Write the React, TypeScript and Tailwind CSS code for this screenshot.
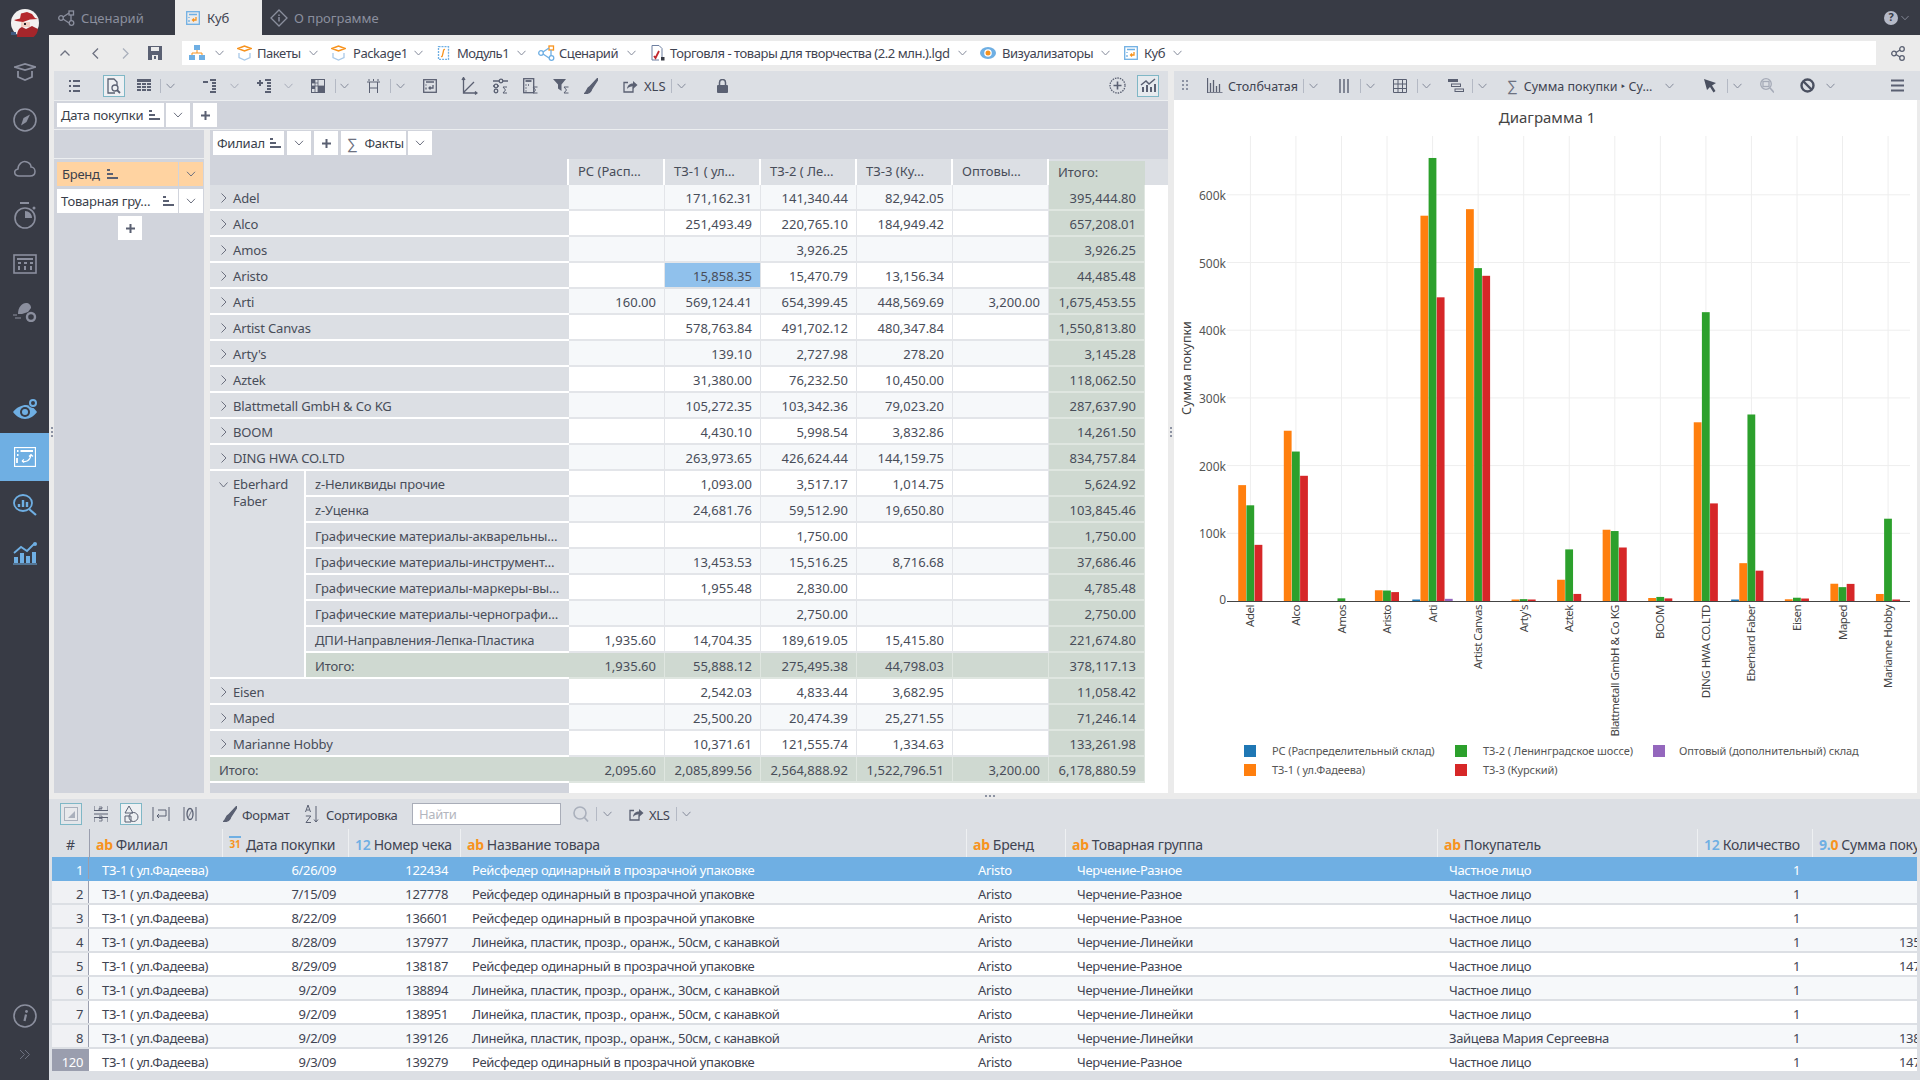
import type { ReactNode } from 'react'

const INK = '#5a6072'

type IcProps = { w: number; h: number; className?: string; children: ReactNode; color?: string }

const Ic = ({ w, h, className = '', children, color = INK }: IcProps) => (
  <svg width={w} height={h} viewBox={`0 0 ${w} ${h}`} fill="none" stroke={color} strokeWidth="1.3" className={`shrink-0 ${className}`}>
    {children}
  </svg>
)

const Chev = ({ className = '', color = '#858b9b', s = 9 }: { className?: string; color?: string; s?: number }) => (
  <svg width={s} height={6} viewBox="0 0 9 6" fill="none" stroke={color} strokeWidth="1" className={`shrink-0 ${className}`}>
    <path d="M.5 .8 4.5 5 8.5 .8" />
  </svg>
)

const Divider = ({ className = '' }: { className?: string }) => <div className={`h-[14px] w-px shrink-0 bg-[#b4b9c4] ${className}`} />

const SortMark = ({ className = '' }: { className?: string }) => (
  <svg width={11} height={11} viewBox="0 0 11 11" fill="#5a6072" className={`shrink-0 ${className}`}>
    <rect x="0" y="0" width="3" height="2" />
    <rect x="0" y="4" width="6" height="2" />
    <rect x="0" y="8" width="11" height="2" />
  </svg>
)

const BoxIcon = ({ className = '' }: { className?: string }) => (
  <Ic w={15} h={16} className={className} color="#f7931e">
    <path d="M1 3.5 7.5 1 14 3.5 7.5 6z" strokeWidth="1.5" />
    <path d="M2 8v4.5L7.5 15 13 12.500V8" stroke="#a9c9e8" />
  </Ic>
)

const CubeIcon = ({ className = '' }: { className?: string }) => (
  <Ic w={14} h={14} className={className} color="#6fafe3">
    <rect x=".7" y=".7" width="12.600" height="12.600" />
    <path d="M3 3.500h8" strokeWidth="1.5" />
    <path d="M3 6v1M3 9v2" stroke="#6fafe3" />
    <path d="M10 6v3H6.500M8 7.500 6.500 9 8 10.500" stroke="#f7931e" />
  </Ic>
)

const ScenarioIcon = ({ className = '', color = '#6fafe3', dot = '#f7931e' }: { className?: string; color?: string; dot?: string }) => (
  <Ic w={17} h={16} className={className} color={color}>
    <circle cx="3" cy="8" r="2.300" />
    <rect x="11" y="1" width="4.500" height="4" stroke={dot} />
    <circle cx="13.500" cy="13" r="2.300" />
    <path d="M5 7 11 3M5 9l6 4M13 5v6" />
  </Ic>
)

const ShareArrow = ({ className = '' }: { className?: string }) => (
  <Ic w={15} h={14} className={className}>
    <path d="M10 7.500V13H1V3.500h4" />
    <path d="M4 10c.500-4 3-5.500 6-5.500V2l4.500 4-4.500 4V7.500C7.500 7.500 5.500 8 4 10z" fill={INK} stroke="none" />
  </Ic>
)

const BrushIcon = ({ className = '' }: { className?: string }) => (
  <Ic w={14} h={16} className={className}>
    <path d="M13.500 .5 6 8.500 8 10.500 13.800 1.500z" fill={INK} />
    <path d="M5.500 9C3 9.500 3.500 13 .5 15.500c4 .3 7-1.500 7-4.500z" fill={INK} />
  </Ic>
)

const Logo = () => (
  <svg width={28} height={28} viewBox="0 0 28 28" className="shrink-0">
    <circle cx="14" cy="14" r="14" fill="#f4f2f1" />
    <path d="M3 11 9 9.500 10 4.500 16 3l5 2 3 4 3 1-8 .5-7 2.500-7-1z" fill="#b5282c" />
    <path d="M10 13h9v5h-9z" fill="#f0cfc3" />
    <path d="M13 14h2v2h-2z" fill="#26262e" />
    <path d="M6 28c0-6 2-9 5-10l4 2 6-3 6 3c-.5 6-6 11-13 11-3 0-6-1-8-3z" fill="#a5262b" />
    <rect x="0" y="23" width="5" height="3" fill="#3d5a80" />
  </svg>
)

const SideItem = ({ children, active = false }: { children: ReactNode; active?: boolean }) => (
  <div className={`flex h-[48px] items-center justify-center ${active ? 'bg-[#6fafe3]' : ''}`}>{children}</div>
)

const Sidebar = () => {
  const g = '#8b8f9e'
  const b = '#6fafe3'
  return (
    <aside className="flex h-full w-[49px] shrink-0 flex-col bg-[#383b45]">
      <div className="flex h-[48px] items-center justify-center pb-[2px]">
        <Logo />
      </div>
      <SideItem>
        <Ic w={22} h={18} color={g}>
          <path d="M1 4 11 1l10 3-10 3zM4 8v6l7 3 7-3V8" strokeWidth="1.800" />
        </Ic>
      </SideItem>
      <SideItem>
        <Ic w={24} h={24} color={g}>
          <circle cx="12" cy="12" r="11" strokeWidth="1.600" />
          <path d="M17 6.500 13.500 14 8 17.500 10.500 10z" fill={g} stroke="none" />
        </Ic>
      </SideItem>
      <SideItem>
        <Ic w={24} h={18} color={g}>
          <path d="M6 17C1 17 0 11 5 10c0-5 5-9 9-7 3 1 4 3 4 5 5 0 6 9-1 9z" strokeWidth="1.500" />
        </Ic>
      </SideItem>
      <SideItem>
        <Ic w={22} h={30} color={g}>
          <path d="M6 2h9" strokeWidth="2" />
          <circle cx="11" cy="17" r="10" strokeWidth="1.600" />
          <path d="M11 10v7h7c0-4-3-7-7-7z" fill={g} stroke="none" />
          <circle cx="20" cy="7" r="1.500" fill={g} stroke="none" />
        </Ic>
      </SideItem>
      <SideItem>
        <Ic w={24} h={20} color={g}>
          <rect x="1" y="1" width="22" height="18" strokeWidth="1.600" />
          <path d="M4 5h16" strokeWidth="2" />
          <path d="M5 9h3M11 9h3M17 9h3M6 12v4M12 12v4M18 12v4" strokeWidth="2" />
        </Ic>
      </SideItem>
      <SideItem>
        <svg width={24} height={20} viewBox="0 0 24 20" fill={g}>
          <path d="M5 12C5 5 9 1 13 1c3 0 5 2 5 5l-3 4-6 2z" />
          <path d="M0 13h4M2 16h6" stroke={g} strokeWidth="1.200" />
          <circle cx="18" cy="15" r="4" fill="none" stroke={g} strokeWidth="2.400" />
        </svg>
      </SideItem>
      <div className="h-[49px]" />
      <SideItem>
        <svg width={24} height={22} viewBox="0 0 24 22" fill="none">
          <path d="M0 14C4 9 9 7 13 7c5 0 8 3 11 7-3 4-7 7-12 7S3 18 0 14z" fill={b} />
          <circle cx="12" cy="14" r="5" fill="#383b45" />
          <circle cx="12" cy="14" r="3" fill={b} />
          <circle cx="20" cy="5" r="5" fill="#383b45" />
          <circle cx="20" cy="5" r="3" stroke={b} strokeWidth="2" />
        </svg>
      </SideItem>
      <SideItem active>
        <svg width={22} height={20} viewBox="0 0 22 20" fill="none" stroke="#fff">
          <rect x=".5" y=".5" width="21" height="19" strokeWidth="1.300" />
          <path d="M3 4h1.500M6.500 4H19M3 8h1.500M3 11v5" strokeWidth="1.800" />
          <path d="M8 14c4 1.500 8 0 9-6M15 9.500l2-2 2 2M8 14l2-1.500M8 14l2 1.500" strokeWidth="1.200" />
        </svg>
      </SideItem>
      <SideItem>
        <svg width={24} height={22} viewBox="0 0 24 22" fill="none" stroke={b} strokeWidth="1.800">
          <ellipse cx="10" cy="9" rx="9" ry="8" />
          <path d="m16 15 7 6" strokeWidth="2.200" />
          <path d="M6 13V10M10 13V6M14 13V8" strokeWidth="2.400" />
        </svg>
      </SideItem>
      <SideItem>
        <svg width={24} height={24} viewBox="0 0 24 24" fill={b}>
          <rect x="1" y="16" width="4" height="6" />
          <rect x="7" y="12" width="4" height="10" />
          <rect x="13" y="15" width="4" height="7" />
          <rect x="19" y="11" width="4" height="11" />
          <path d="M0 23h24" stroke={b} />
          <path d="M1 12 8 6l6 4 7-7" fill="none" stroke={b} strokeWidth="1.800" />
          <circle cx="22" cy="3" r="2" />
        </svg>
      </SideItem>
      <div className="mt-auto flex h-[38px] items-center justify-center">
        <svg width={24} height={24} viewBox="0 0 24 24" fill="none" stroke="#8b8f9e" strokeWidth="1.600">
          <ellipse cx="12" cy="12" rx="11" ry="11" />
          <path d="M13 10.500 11.500 17" strokeWidth="2.200" />
          <circle cx="13.500" cy="7.500" r="1.400" fill="#8b8f9e" stroke="none" />
        </svg>
      </div>
      <div className="mb-[7px] flex h-[38px] items-center justify-center">
        <svg width={12} height={11} viewBox="0 0 12 11" fill="none" stroke="#6d7180">
          <path d="m1 1 4.500 4.500L1 10M6 1l4.500 4.500L6 10" />
        </svg>
      </div>
    </aside>
  )
}

const TabBar = () => (
  <div className="flex h-[35px] shrink-0 items-stretch bg-[#383b45] text-[13px] text-[#8b8f9e]">
    <div className="flex w-[126px] items-center pl-[9px]">
      <ScenarioIcon color="#8b8f9e" dot="#8b8f9e" />
      <span className="ml-[6px] pt-[2px]">Сценарий</span>
    </div>
    <div className="flex w-[87px] items-center bg-[#ebebeb] pl-[11px] text-[#3f4452]">
      <CubeIcon />
      <span className="ml-[7px] pt-[2px]">Куб</span>
    </div>
    <div className="ml-[8px] flex items-center">
      <Ic w={18} h={18} color="#8b8f9e">
        <path d="M9 1 17 9 9 17 1 9z" />
        <path d="M9 8v4.500M9 5.500v1.500" strokeWidth="1.500" />
      </Ic>
      <span className="ml-[6px] pt-[2px]">О программе</span>
    </div>
    <div className="mr-[11px] ml-auto flex items-center gap-[3px]">
      <div className="flex h-[14px] w-[14px] items-center justify-center rounded-full bg-[#b6bac8] text-[11px] font-bold text-[#383b45]">?</div>
      <Chev color="#8b8f9e" s={8} />
    </div>
  </div>
)

const BreadcrumbBar = () => (
  <div className="flex h-[36px] shrink-0 items-center text-[13px] tracking-[-0.45px] whitespace-nowrap text-[#3f4452]">
    <Ic w={10} h={6} className="ml-[11px]" color="#6d7180">
      <path d="M.5 5.500 5 1l4.500 4.500" />
    </Ic>
    <Ic w={7} h={11} className="ml-[22px]" color="#6d7180">
      <path d="M6 .5 1 5.500 6 10.500" />
    </Ic>
    <Ic w={7} h={11} className="ml-[23px]" color="#aab0bc">
      <path d="M1 .5 6 5.500 1 10.500" />
    </Ic>
    <svg width={14} height={14} viewBox="0 0 14 14" className="ml-[19px] shrink-0" fill={INK}>
      <path d="M0 0h14v14H0z" />
      <rect x="3" y="1" width="8" height="4" fill="#ebebeb" />
      <rect x="4" y="9" width="6" height="5" fill="#ebebeb" />
      <rect x="6" y="10" width="2" height="3" fill={INK} />
    </svg>
    <div className="ml-[20px] flex h-[24px] flex-1 items-center bg-white">
      <svg width={16} height={16} viewBox="0 0 16 16" className="ml-[7px] shrink-0" fill="#6fafe3">
        <rect x="5" y="0" width="6" height="5" />
        <rect x="0" y="10" width="6" height="5" />
        <rect x="10" y="10" width="6" height="5" />
        <path d="M8 5v3M3 10V8h10v2" fill="none" stroke="#f7931e" />
      </svg>
      <Chev className="ml-[10px]" />
      <BoxIcon className="ml-[13px]" />
      <span className="ml-[5px] w-[44px] pt-[1px]">Пакеты</span>
      <Chev className="ml-[8px]" />
      <BoxIcon className="ml-[13px]" />
      <span className="ml-[7px] w-[52px] pt-[1px]">Package1</span>
      <Chev className="ml-[9px]" />
      <Ic w={13} h={14} className="ml-[14px]" color="#6fafe3">
        <rect x="1.500" y=".7" width="10" height="12.600" strokeDasharray="2 1" />
        <path d="M8 3.500C6.500 3 6.500 5 6 7s-.5 4-2 3.500" stroke="#f7931e" />
      </Ic>
      <span className="ml-[7px] w-[51px] pt-[1px]">Модуль1</span>
      <Chev className="ml-[9px]" />
      <ScenarioIcon className="ml-[12px]" />
      <span className="ml-[4px] w-[59px] pt-[1px]">Сценарий</span>
      <Chev className="ml-[9px]" />
      <svg width={14} height={16} viewBox="0 0 14 16" className="ml-[15px] shrink-0" fill="none" stroke="#6d7fa0">
        <path d="M1 .5h7l3 3V12M1 .5V15h7" />
        <path d="M3 11l1.500 2L8 6" stroke="#c1272d" strokeWidth="1.800" />
        <rect x="10" y="12" width="3.500" height="3.500" fill="#383b45" stroke="none" />
      </svg>
      <span className="ml-[5px] w-[280px] pt-[1px]">Торговля - товары для творчества (2.2 млн.).lgd</span>
      <Chev className="ml-[8px]" />
      <svg width={16} height={12} viewBox="0 0 16 12" className="ml-[13px] shrink-0">
        <ellipse cx="8" cy="6" rx="8" ry="6" fill="#6fafe3" />
        <circle cx="8" cy="6" r="3.800" fill="#fff" />
        <circle cx="8" cy="6" r="2.500" fill="#f7931e" />
      </svg>
      <span className="ml-[6px] w-[91px] pt-[1px]">Визуализаторы</span>
      <Chev className="ml-[8px]" />
      <CubeIcon className="ml-[14px]" />
      <span className="ml-[6px] w-[21px] pt-[1px]">Куб</span>
      <Chev className="ml-[8px]" />
    </div>
    <div className="flex w-[44px] justify-center">
      <Ic w={14} h={15} color="#5a6072">
        <circle cx="3" cy="7.500" r="2.300" />
        <circle cx="11" cy="3" r="2.300" />
        <circle cx="11" cy="12" r="2.300" />
        <path d="M5 6.500 9 4M5 8.500l4 2.500" />
      </Ic>
    </div>
  </div>
)

const Framed = ({ children, className = '' }: { children: ReactNode; className?: string }) => (
  <div className={`flex h-[22px] w-[22px] shrink-0 items-center justify-center border border-[#7fb7c6] ${className}`}>{children}</div>
)

const PivotToolbar = () => (
  <div className="flex h-[29px] shrink-0 items-center bg-[#dcdfe4] text-[13px] text-[#3f4452]">
    <Ic w={11} h={14} className="ml-[15px]">
      <path d="M0 2h2M4 2h7M0 7h2M4 7h7M0 12h2M4 12h7" strokeWidth="2" />
    </Ic>
    <Framed className="ml-[23px] bg-[#eef0f3]">
      <Ic w={14} h={16}>
        <path d="M8 15H1V1h6l3 3v3" />
        <circle cx="8" cy="10" r="3" />
        <path d="m10 12 3 3" strokeWidth="1.800" />
      </Ic>
    </Framed>
    <svg width={14} height={13} viewBox="0 0 14 13" fill={INK} className="ml-[12px] shrink-0">
      <rect width="14" height="3" />
      <path d="M0 4h4v2H0zM5 4h4v2H5zM10 4h4v2h-4zM0 7h4v2H0zM5 7h4v2H5zM10 7h4v2h-4zM0 10h4v2H0zM5 10h4v2H5zM10 10h4v2h-4z" />
    </svg>
    <Divider className="ml-[9px]" />
    <Chev className="ml-[5px]" />
    <svg width={13} height={14} viewBox="0 0 13 14" fill={INK} className="ml-[28px] shrink-0">
      <path d="M0 2h5v2H0zM7 0h6v2H7zM9 3h4v2H9zM9 6h4v2H9zM9 9h4v2H9zM7 12h6v2H7z" />
    </svg>
    <Chev className="ml-[14px]" color="#a6abb8" />
    <svg width={14} height={14} viewBox="0 0 14 14" fill={INK} className="ml-[18px] shrink-0">
      <path d="M2 1h2v2h2v2H4v2H2V5H0V3h2zM8 0h6v2H8zM10 3h4v2h-4zM10 6h4v2h-4zM10 9h4v2h-4zM8 12h6v2H8z" />
    </svg>
    <Chev className="ml-[13px]" color="#a6abb8" />
    <svg width={14} height={14} viewBox="0 0 14 14" className="ml-[18px] shrink-0">
      <rect x=".5" y=".5" width="13" height="13" fill="none" stroke={INK} />
      <path d="M1 1h3v3H1zM7 7h6v6H7zM1 7h3v3H1z" fill={INK} />
      <path d="M7 1v12M1 7h12M1 4h6M4 1v12" stroke={INK} strokeWidth=".8" />
    </svg>
    <Divider className="ml-[10px]" />
    <Chev className="ml-[4px]" />
    <Ic w={13} h={14} className="ml-[18px]">
      <path d="M0 3h13M2.500 3v11M10.500 3v11M2 0v2M6.500 0v2M11 0v2M2.500 9h8" strokeWidth="1" />
    </Ic>
    <Divider className="ml-[10px]" />
    <Chev className="ml-[5px]" />
    <Ic w={14} h={14} className="ml-[18px]">
      <rect x=".7" y=".7" width="12.600" height="12.600" />
      <path d="M3 3h8M3 5.500v1M3 8.500v2M10 6v3H6M7.500 7.500 6 9l1.500 1.500" />
    </Ic>
    <Ic w={17} h={18} className="ml-[24px]">
      <path d="M2.500 1v15H16M1 3l1.500-2.500L4 3M14 14.500l2 1.500-2 1.500M3 15 13 5" />
    </Ic>
    <Ic w={15} h={16} className="ml-[15px]">
      <path d="M0 3h15M0 8h6" />
      <circle cx="8" cy="3" r="1.800" fill="#dcdfe4" />
      <circle cx="3" cy="8" r="1.800" fill="#dcdfe4" />
      <circle cx="3" cy="13" r="1.800" />
      <path d="M14 9H10l2.500 3L10 15h4" strokeWidth="1" />
    </Ic>
    <Ic w={15} h={16} className="ml-[15px]">
      <rect x=".7" y=".7" width="10" height="14" />
      <path d="M2.500 3h6" strokeWidth="1.800" />
      <path d="M2.500 7h1M2.500 10h1M2.500 13h1M5 7h1" />
      <path d="M14.500 9H10l2.500 3L10 15h4.500" strokeWidth="1" />
    </Ic>
    <svg width={16} height={16} viewBox="0 0 16 16" className="ml-[15px] shrink-0">
      <path d="M0 1h13L8.500 6.500V13L5 10.500v-4z" fill={INK} />
      <path d="M15.500 9H11l2.500 3L11 15h4.500" fill="none" stroke={INK} />
    </svg>
    <BrushIcon className="ml-[15px]" />
    <ShareArrow className="ml-[25px]" />
    <span className="ml-[6px] w-[21px] pt-[2px]">XLS</span>
    <Divider className="ml-[6px]" />
    <Chev className="ml-[5px]" />
    <svg width={11} height={14} viewBox="0 0 11 14" fill={INK} className="ml-[31px] shrink-0">
      <rect x="0" y="6" width="11" height="8" rx="1" />
      <path d="M2.500 6V3.500a3 3 0 0 1 6 0V6" fill="none" stroke={INK} strokeWidth="1.500" />
    </svg>
    <Ic w={17} h={17} className="ml-auto">
      <circle cx="8.500" cy="8.500" r="7.500" strokeDasharray="1.500 1" />
      <path d="M8.500 4.500v8M4.500 8.500h8" strokeWidth="1.600" />
    </Ic>
    <Framed className="mr-[9px] ml-[11px] bg-[#e6eaee]">
      <svg width={16} height={15} viewBox="0 0 16 15" fill={INK}>
        <path d="M2 9h2v5H2zM6 7h2v7H6zM10 9h2v5h-2zM14 6h2v8h-2z" />
        <path d="M1 7 6 3l3 3 6-5" fill="none" stroke={INK} strokeWidth="1.500" />
      </svg>
    </Framed>
  </div>
)

const Chip = ({ children, className = 'bg-white' }: { children: ReactNode; className?: string }) => (
  <div className={`flex h-[24px] shrink-0 items-center pt-[2px] text-[13px] tracking-[-0.25px] whitespace-nowrap text-[#3a3f4b] ${className}`}>{children}</div>
)

const ChevChip = ({ className = 'ml-[3px] bg-white' }: { className?: string }) => (
  <div className={`flex h-[24px] w-[24px] shrink-0 items-center justify-center ${className}`}>
    <Chev s={10} color="#6d7180" />
  </div>
)

const PlusChip = ({ className = 'ml-[3px]' }: { className?: string }) => (
  <div className={`flex h-[24px] w-[24px] shrink-0 items-center justify-center bg-white ${className}`}>
    <svg width={9} height={9} viewBox="0 0 9 9" stroke={INK} strokeWidth="2">
      <path d="M4.500 0v9M0 4.500h9" />
    </svg>
  </div>
)

type PivotValues = [string, string, string, string, string, string]

const brands: [string, PivotValues][] = [
  ['Adel', ['', '171,162.31', '141,340.44', '82,942.05', '', '395,444.80']],
  ['Alco', ['', '251,493.49', '220,765.10', '184,949.42', '', '657,208.01']],
  ['Amos', ['', '', '3,926.25', '', '', '3,926.25']],
  ['Aristo', ['', '15,858.35', '15,470.79', '13,156.34', '', '44,485.48']],
  ['Arti', ['160.00', '569,124.41', '654,399.45', '448,569.69', '3,200.00', '1,675,453.55']],
  ['Artist Canvas', ['', '578,763.84', '491,702.12', '480,347.84', '', '1,550,813.80']],
  ["Arty's", ['', '139.10', '2,727.98', '278.20', '', '3,145.28']],
  ['Aztek', ['', '31,380.00', '76,232.50', '10,450.00', '', '118,062.50']],
  ['Blattmetall GmbH & Co KG', ['', '105,272.35', '103,342.36', '79,023.20', '', '287,637.90']],
  ['BOOM', ['', '4,430.10', '5,998.54', '3,832.86', '', '14,261.50']],
  ['DING HWA CO.LTD', ['', '263,973.65', '426,624.44', '144,159.75', '', '834,757.84']],
]

const groups: [string, PivotValues][] = [
  ['z-Неликвиды прочие', ['', '1,093.00', '3,517.17', '1,014.75', '', '5,624.92']],
  ['z-Уценка', ['', '24,681.76', '59,512.90', '19,650.80', '', '103,845.46']],
  ['Графические материалы-акварельны…', ['', '', '1,750.00', '', '', '1,750.00']],
  ['Графические материалы-инструмент…', ['', '13,453.53', '15,516.25', '8,716.68', '', '37,686.46']],
  ['Графические материалы-маркеры-вы…', ['', '1,955.48', '2,830.00', '', '', '4,785.48']],
  ['Графические материалы-черногрaфи…', ['', '', '2,750.00', '', '', '2,750.00']],
  ['ДПИ-Направления-Лепка-Пластика', ['1,935.60', '14,704.35', '189,619.05', '15,415.80', '', '221,674.80']],
]

const tail: [string, PivotValues][] = [
  ['Eisen', ['', '2,542.03', '4,833.44', '3,682.95', '', '11,058.42']],
  ['Maped', ['', '25,500.20', '20,474.39', '25,271.55', '', '71,246.14']],
  ['Marianne Hobby', ['', '10,371.61', '121,555.74', '1,334.63', '', '133,261.98']],
]

const Cells = ({ values, shaded, total, hiIndex }: { values: PivotValues; shaded: boolean; total?: boolean; hiIndex?: number }) => (
  <>
    {values.map((v, i) => (
      <div
        key={i}
        className={`flex w-[96px] shrink-0 items-center justify-end border-r border-b-2 pt-[4px] pr-[8px] tracking-normal ${
          i === hiIndex
            ? 'border-[#dfe2e6] bg-[#90c1ec]'
            : total || i === 5
              ? 'border-[#dfe6e0] bg-[#cfd9d1]'
              : shaded
                ? 'border-[#e3e5e9] bg-[#f6f8fa]'
                : 'border-[#e3e5e9] bg-white'
        }`}
      >
        {v}
      </div>
    ))}
  </>
)

const Caret = ({ open = false }: { open?: boolean }) =>
  open ? (
    <svg width={9} height={6} viewBox="0 0 9 6" fill="none" stroke="#6d7180" className="absolute top-[11px] left-[9px]">
      <path d="M.5 .5 4.500 5 8.500 .5" />
    </svg>
  ) : (
    <svg width={6} height={10} viewBox="0 0 6 10" fill="none" stroke="#6d7180" className="mr-[6px] mb-[2px] shrink-0">
      <path d="M.5 .5 5 5 .5 9.500" />
    </svg>
  )

const BrandRow = ({ name, values, shaded, hiIndex }: { name: string; values: PivotValues; shaded: boolean; hiIndex?: number }) => (
  <div className="flex h-[26px]">
    <div className="flex w-[359px] shrink-0 items-center border-b-2 border-white bg-[#dcdfe4] pt-[4px] pl-[11px]">
      <Caret />
      {name}
    </div>
    <Cells values={values} shaded={shaded} hiIndex={hiIndex} />
  </div>
)

const PivotTable = () => (
  <div className="flex flex-1 flex-col overflow-hidden bg-white text-[13px] tracking-[-0.15px] text-[#484d59]">
    <div className="flex h-[26px] shrink-0 bg-[#d1d4dc] tracking-normal">
      <div className="w-[359px] shrink-0 border-r-2 border-white" />
      {['РС (Расп…', 'ТЗ-1 ( ул…', 'ТЗ-2 ( Ле…', 'ТЗ-3 (Ку…', 'Оптовы…'].map((t) => (
        <div key={t} className="flex w-[96px] shrink-0 items-center border-r-2 border-white bg-[#dcdfe4] pl-[9px]">
          {t}
        </div>
      ))}
      <div className="flex w-[96px] shrink-0 items-center border-t-2 border-[#dcdfe4] bg-[#cfd9d1] pl-[9px]">Итого:</div>
      <div className="flex-1 bg-[#dcdfe4]" />
    </div>
    {brands.map(([name, values], i) => (
      <BrandRow key={name} name={name} values={values} shaded={i % 2 === 0} hiIndex={name === 'Aristo' ? 1 : undefined} />
    ))}
    <div className="flex h-[208px]">
      <div className="relative w-[96px] shrink-0 border-r-2 border-b-2 border-white bg-[#dcdfe4] pt-[3px] pl-[23px] leading-[17px]">
        <Caret open />
        <div className="pt-[2px]">Eberhard</div>
        <div>Faber</div>
      </div>
      <div className="flex flex-col">
        {groups.map(([name, values], i) => (
          <div key={name} className="flex h-[26px]">
            <div className="flex w-[263px] shrink-0 items-center border-b-2 border-white bg-[#dcdfe4] pt-[4px] pl-[9px] whitespace-nowrap">{name}</div>
            <Cells values={values} shaded={i % 2 === 1} />
          </div>
        ))}
        <div className="flex h-[26px]">
          <div className="flex w-[263px] shrink-0 items-center border-b-2 border-white bg-[#cfd9d1] pt-[4px] pl-[9px]">Итого:</div>
          <Cells values={['1,935.60', '55,888.12', '275,495.38', '44,798.03', '', '378,117.13']} shaded={false} total />
        </div>
      </div>
    </div>
    {tail.map(([name, values], i) => (
      <BrandRow key={name} name={name} values={values} shaded={i === 1} />
    ))}
    <div className="flex h-[26px] shrink-0">
      <div className="flex w-[359px] shrink-0 items-center border-b-2 border-white bg-[#cfd9d1] pt-[4px] pl-[9px]">Итого:</div>
      <Cells values={['2,095.60', '2,085,899.56', '2,564,888.92', '1,522,796.51', '3,200.00', '6,178,880.59']} shaded={false} total />
    </div>
    <div className="w-[359px] flex-1 bg-[#d1d4dc]" />
  </div>
)

const PivotPanel = () => (
  <div className="flex w-[1114px] shrink-0 flex-col">
    <PivotToolbar />
    <div className="flex h-[29px] shrink-0 items-center border-t border-[#eceef0] bg-[#d1d4dc] pl-[3px]">
      <Chip className="w-[107px] bg-white pl-[4px]">
        Дата покупки
        <SortMark className="ml-[6px] mb-[2px]" />
      </Chip>
      <ChevChip className="ml-[2px] bg-white" />
      <PlusChip />
    </div>
    <div className="flex flex-1 overflow-hidden border-t border-[#eceef0]">
      <div className="flex w-[150px] shrink-0 flex-col bg-[#d1d4dc]">
        <div className="h-[29px] shrink-0 border-b border-[#eceef0]" />
        <div className="mt-[3px] flex pl-[3px]">
          <Chip className="w-[121px] bg-[#ffd3a1] pl-[5px]">
            Бренд
            <SortMark className="ml-[7px] mb-[2px]" />
          </Chip>
          <ChevChip className="ml-[1px] bg-[#ffd3a1]" />
        </div>
        <div className="mt-[3px] flex pl-[3px]">
          <Chip className="w-[121px] bg-white pl-[4px]">
            Товарная гру…
            <SortMark className="mr-[4px] mb-[2px] ml-auto" />
          </Chip>
          <ChevChip className="ml-[1px] bg-white" />
        </div>
        <PlusChip className="mt-[3px] ml-[64px]" />
      </div>
      <div className="w-[6px] shrink-0 bg-[#ebebeb]" />
      <div className="flex flex-1 flex-col overflow-hidden">
        <div className="flex h-[29px] shrink-0 items-start bg-[#d1d4dc] pt-[1px] pl-[3px]">
          <Chip className="w-[71px] bg-white pl-[4px]">
            Филиал
            <SortMark className="ml-[5px] mb-[2px]" />
          </Chip>
          <ChevChip className="ml-[3px] bg-white" />
          <PlusChip />
          <Chip className="ml-[3px] w-[65px] bg-white pl-[6px]">
            <span className="mb-[2px] text-[15px] text-[#6d7180]">∑</span>
            <span className="ml-[7px]">Факты</span>
          </Chip>
          <ChevChip className="ml-[2px] bg-white" />
        </div>
        <PivotTable />
      </div>
    </div>
  </div>
)

const chartData: [string, number, number, number, number, number][] = [
  ['Adel', 0, 171162, 141340, 82942, 0],
  ['Alco', 0, 251493, 220765, 184949, 0],
  ['Amos', 0, 0, 3926, 0, 0],
  ['Aristo', 0, 15858, 15470, 13156, 0],
  ['Arti', 160, 569124, 654399, 448569, 3200],
  ['Artist Canvas', 0, 578763, 491702, 480347, 0],
  ["Arty's", 0, 139, 2727, 278, 0],
  ['Aztek', 0, 31380, 76232, 10450, 0],
  ['Blattmetall GmbH & Co KG', 0, 105272, 103342, 79023, 0],
  ['BOOM', 0, 4430, 5998, 3832, 0],
  ['DING HWA CO.LTD', 0, 263973, 426624, 144159, 0],
  ['Eberhard Faber', 1935, 55888, 275495, 44798, 0],
  ['Eisen', 0, 2542, 4833, 3682, 0],
  ['Maped', 0, 25500, 20474, 25271, 0],
  ['Marianne Hobby', 0, 10371, 121555, 1334, 0],
]

const seriesColors = ['#1f77b4', '#ff7f0e', '#2ca02c', '#d62728', '#9467bd']

const legend: [number, number, string, number, string][] = [
  [1244, 745, '#1f77b4', 1272, 'РС (Распределительный склад)'],
  [1244, 764, '#ff7f0e', 1272, 'ТЗ-1 ( ул.Фадеева)'],
  [1455, 745, '#2ca02c', 1483, 'ТЗ-2 ( Ленинградское шоссе)'],
  [1455, 764, '#d62728', 1483, 'ТЗ-3 (Курский)'],
  [1653, 745, '#9467bd', 1679, 'Оптовый (дополнительный) склад'],
]

const ChartSvg = () => {
  const base = 601
  const y = (v: number) => base - (v / 100000) * 67.7
  const cx = (i: number) => 1250.4 + i * 45.55
  return (
    <svg viewBox="1174 100 743 693" width={743} height={693} className="block bg-white text-[12px] tracking-normal" fontFamily="'Noto Sans', sans-serif">
      <text x="1547" y="123" textAnchor="middle" fontSize="15" fill="#444">
        Диаграмма 1
      </text>
      {chartData.map((d, i) => (
        <path key={d[0]} d={`M${cx(i)} 136V601`} stroke="#eeeeee" />
      ))}
      {[1, 2, 3, 4, 5, 6].map((k) => (
        <path key={k} d={`M1227 ${y(k * 100000)}H1910`} stroke="#eeeeee" />
      ))}
      {[0, 1, 2, 3, 4, 5, 6].map((k) => (
        <text key={k} x="1226" y={y(k * 100000) + (k === 0 ? 3 : 5)} textAnchor="end" fill="#555">
          {k === 0 ? '0' : `${k}00k`}
        </text>
      ))}
      <text transform="translate(1191 368) rotate(-90)" textAnchor="middle" fontSize="12.500" fill="#444">
        Сумма покупки
      </text>
      {chartData.map((d, i) =>
        [d[1], d[2], d[3], d[4], d[5]].map((v, s) => {
          if (v <= 0) return null
          const h = Math.max(base - y(v), 1.500)
          return <rect key={s} x={cx(i) + (s - 2) * 8.15 - 4} y={base - h} width={7.800} height={h} fill={seriesColors[s]} />
        }),
      )}
      <path d="M1227 601.500H1910" stroke="#444" />
      {chartData.map((d, i) => (
        <text key={d[0]} transform={`translate(${cx(i) + 4} 605) rotate(-90)`} textAnchor="end" fill="#444" fontSize="11.500" letterSpacing="-0.5">
          {d[0]}
        </text>
      ))}
      {legend.map(([x, ly, c, tx, t]) => (
        <g key={t}>
          <rect x={x} y={ly} width={12} height={12} fill={c} />
          <text x={tx} y={ly + 10} fill="#555" fontSize="11" letterSpacing="-0.1">
            {t}
          </text>
        </g>
      ))}
    </svg>
  )
}

const ChartToolbar = () => (
  <div className="flex h-[29px] shrink-0 items-center bg-[#dcdfe4] text-[12.500px] text-[#3f4452]">
    <svg width={6} height={11} viewBox="0 0 6 11" fill="#8d93a3" className="ml-[8px] shrink-0">
      <path d="M0 0h2v2H0zM4 0h2v2H4zM0 4h2v2H0zM4 4h2v2H4zM0 8h2v2H0zM4 8h2v2H4z" />
    </svg>
    <Ic w={16} h={15} className="ml-[19px]">
      <path d="M.5 0v15h15M3.500 5v9M6.500 2v12M9.500 8v6M12.500 6v8" />
    </Ic>
    <span className="ml-[5px] w-[68px] pt-[3px] whitespace-nowrap">Столбчатая</span>
    <Divider className="ml-[7px]" />
    <Chev className="ml-[5px]" />
    <Ic w={10} h={14} className="ml-[21px]">
      <path d="M1 0v14M5 0v14M9 0v14" strokeWidth="1.400" />
    </Ic>
    <Divider className="ml-[11px]" />
    <Chev className="ml-[5px]" />
    <Ic w={14} h={14} className="ml-[18px]">
      <path d="M.5.5h13v13H.5zM.5 5h13M.5 9.500h13M5 .5v13M9.500 .5v13" strokeWidth="1" />
    </Ic>
    <Divider className="ml-[10px]" />
    <Chev className="ml-[4px]" />
    <svg width={16} height={13} viewBox="0 0 16 13" className="ml-[17px] shrink-0" fill={INK}>
      <rect x="0" y="0" width="10" height="3" />
      <rect x="3.500" y="5" width="9" height="2.500" fill="none" stroke={INK} strokeWidth="1" />
      <rect x="7" y="10" width="8.500" height="2.500" fill="none" stroke={INK} strokeWidth="1" />
    </svg>
    <Divider className="ml-[8px]" />
    <Chev className="ml-[5px]" />
    <span className="ml-[20px] text-[15px] text-[#6d7180]">∑</span>
    <span className="ml-[6px] w-[127px] pt-[3px] whitespace-nowrap">Сумма покупки ‣ Су…</span>
    <Chev className="ml-[14px]" />
    <svg width={12} height={14} viewBox="0 0 12 14" fill="#4a5060" className="ml-[30px] shrink-0">
      <path d="M0 0 12 4 8 6.500l3.500 5.500-2 1.500L6 8l-3 3z" />
    </svg>
    <Divider className="ml-[11px]" />
    <Chev className="ml-[5px]" />
    <Ic w={14} h={15} className="ml-[18px]" color="#a6abb8">
      <circle cx="6" cy="6" r="5.300" />
      <rect x="3" y="3.500" width="6" height="5" />
      <path d="m10 10 4 4.500" strokeWidth="1.600" />
    </Ic>
    <Ic w={15} h={15} className="ml-[26px]" color="#4a5060">
      <circle cx="7.500" cy="7.500" r="6" strokeWidth="2.400" />
      <path d="m3.500 3.500 8 8" strokeWidth="2.400" />
    </Ic>
    <Chev className="ml-[11px]" />
    <Ic w={13} h={13} className="mr-[16px] ml-auto">
      <path d="M0 1.500h13M0 6.500h13M0 11.500h13" strokeWidth="2" />
    </Ic>
  </div>
)

const ChartPanel = () => (
  <div className="flex flex-1 flex-col">
    <ChartToolbar />
    <ChartSvg />
  </div>
)

type GridRow = [string, string, string, string, string, string, string, string]

const L50 = 'Линейка, пластик, прозр., оранж., 50см, с канавкой'
const L30 = 'Линейка, пластик, прозр., оранж., 30см, с канавкой'
const R = 'Рейсфедер одинарный в прозрачной упаковке'
const CR = 'Черчение-Разное'
const CL = 'Черчение-Линейки'
const P = 'Частное лицо'

const gridRows: GridRow[] = [
  ['1', '6/26/09', '122434', R, CR, P, '', ''],
  ['2', '7/15/09', '127778', R, CR, P, '', ''],
  ['3', '8/22/09', '136601', R, CR, P, '', ''],
  ['4', '8/28/09', '137977', L50, CL, P, '135.00', ''],
  ['5', '8/29/09', '138187', R, CR, P, '147.00', ''],
  ['6', '9/2/09', '138894', L30, CL, P, '', ''],
  ['7', '9/2/09', '138951', L50, CL, P, '', ''],
  ['8', '9/2/09', '139126', L50, CL, 'Зайцева Мария Сергеевна', '138.00', ''],
  ['120', '9/3/09', '139279', R, CR, P, '147.00', ''],
]

const TypeTag = ({ kind }: { kind: 'ab' | '12' | '9' | '31' }) => {
  if (kind === 'ab') return <span className="mr-[3px] font-bold text-[#f7931e]">ab</span>
  if (kind === '12') return <span className="mr-[3px] font-semibold text-[#6fafe3]">12</span>
  if (kind === '9')
    return (
      <span className="mr-[3px] font-bold">
        <span className="text-[#6fafe3]">9.</span>
        <span className="text-[#f7931e]">0</span>
      </span>
    )
  return (
    <span className="mr-[5px] mb-[2px] flex h-[14px] w-[12px] flex-col items-center border-t-2 border-[#6fafe3] text-[10px] leading-[12px] font-bold text-[#f7931e]">31</span>
  )
}

const GridHead = ({ w, kind, children }: { w: string; kind: 'ab' | '12' | '9' | '31'; children: string }) => (
  <div className={`flex shrink-0 items-center overflow-hidden border-l border-[#eef0f2] pt-[2px] pl-[6px] whitespace-nowrap ${w}`}>
    <TypeTag kind={kind} />
    {children}
  </div>
)

const GridPanel = () => (
  <div className="flex min-h-0 flex-1 flex-col bg-[#dcdfe4] text-[13px] tracking-[-0.33px] text-[#3f4452]">
    <div className="flex h-[30px] shrink-0 items-center">
      <Framed className="ml-[11px] bg-[#e3e6ea]">
        <svg width={14} height={14} viewBox="0 0 14 14">
          <rect x=".5" y=".5" width="13" height="13" fill="#e8e9ec" stroke="#aab0bc" />
          <path d="M11 4v7H4z" fill="#aab0bc" />
        </svg>
      </Framed>
      <Ic w={14} h={18} className="ml-[12px]">
        <path d="M0 1v4.500h14V1M0 17v-4.500h14V17M0 9h14" strokeWidth="1" />
        <path d="M5 2h3v1.500H5V5h3M5 11h3v2.500H5M8 13.500V16H5" strokeWidth=".8" />
      </Ic>
      <Framed className="ml-[12px] bg-[#eef0f3]">
        <Ic w={15} h={18}>
          <path d="M5 1 1 8h8zM1 11h6v6H1z" strokeWidth="1" />
          <circle cx="9.500" cy="12" r="4.500" strokeWidth="1" />
        </Ic>
      </Framed>
      <Ic w={18} h={16} className="ml-[10px]">
        <path d="M1 1v14M17 1v14M14 4H6M14 4v6H5M7 8l-2 2 2 2" strokeWidth="1" />
      </Ic>
      <Ic w={14} h={16} className="ml-[13px]">
        <path d="M1 1v14M13 1v14" strokeWidth="1" />
        <ellipse cx="7" cy="8" rx="3" ry="5.500" />
        <path d="M5 12 9 4" strokeWidth=".8" />
      </Ic>
      <BrushIcon className="ml-[26px]" />
      <span className="ml-[5px] w-[47px] pt-[3px]">Формат</span>
      <svg width={15} height={20} viewBox="0 0 15 20" className="ml-[16px] shrink-0" fill="none" stroke={INK}>
        <path d="m.5 8 2.500-7 2.500 7M1.500 6h3M.8 12h5L1 18.500h5" />
        <path d="M11 2v16M9 15.500l2 2.500 2-2.500" />
      </svg>
      <span className="ml-[6px] w-[71px] pt-[3px] whitespace-nowrap">Сортировка</span>
      <div className="ml-[15px] flex h-[22px] w-[149px] shrink-0 items-center border border-[#a9adb8] bg-white pt-[2px] pl-[6px] text-[#b3b6be]">Найти</div>
      <Ic w={16} h={16} className="ml-[12px]" color="#aab0bc">
        <circle cx="7" cy="7" r="6" strokeWidth="1.600" />
        <path d="m11 11 4 4.500" strokeWidth="1.800" />
      </Ic>
      <Divider className="ml-[7px]" />
      <Chev className="ml-[6px]" />
      <ShareArrow className="ml-[17px]" />
      <span className="ml-[5px] w-[21px] pt-[3px]">XLS</span>
      <Divider className="ml-[6px]" />
      <Chev className="ml-[5px]" />
    </div>
    <div className="flex h-[28px] shrink-0 pl-[3px] text-[14px] tracking-[-0.2px] whitespace-nowrap">
      <div className="flex w-[37px] shrink-0 items-center justify-center pt-[2px]">#</div>
      <GridHead w="w-[133px] border-l-[#9a9eae]" kind="ab">
        Филиал
      </GridHead>
      <GridHead w="w-[126px]" kind="31">
        Дата покупки
      </GridHead>
      <GridHead w="w-[112px]" kind="12">
        Номер чека
      </GridHead>
      <GridHead w="w-[506px]" kind="ab">
        Название товара
      </GridHead>
      <GridHead w="w-[99px]" kind="ab">
        Бренд
      </GridHead>
      <GridHead w="w-[372px]" kind="ab">
        Товарная группа
      </GridHead>
      <GridHead w="w-[260px]" kind="ab">
        Покупатель
      </GridHead>
      <GridHead w="w-[115px]" kind="12">
        Количество
      </GridHead>
      <GridHead w="w-[105px]" kind="9">
        Сумма покупки
      </GridHead>
    </div>
    <div className="flex flex-col pl-[3px] whitespace-nowrap">
      {gridRows.map((r, i) => {
        const sel = i === 0
        const last = i === gridRows.length - 1
        return (
          <div
            key={r[0]}
            className={`flex h-[24px] w-[1865px] shrink-0 items-center border-b-2 ${
              sel ? 'border-[#6fafe3] bg-[#6fafe3] text-white' : i % 2 === 1 ? 'border-[#dcdfe4] bg-[#f6f8fa]' : 'border-[#dcdfe4] bg-white'
            }`}
          >
            <div
              className={`flex h-full w-[37px] shrink-0 items-center justify-end border-r pt-[6px] pr-[5px] ${
                last ? 'border-[#9a9eae] bg-[#9a9eae] text-white' : sel ? 'border-[#9a9eae]' : 'border-[#9a9eae] bg-[#f0f1f4]'
              }`}
            >
              {r[0]}
            </div>
            <div className="w-[133px] shrink-0 pt-[6px] pl-[13px]">ТЗ-1 ( ул.Фадеева)</div>
            <div className="w-[126px] shrink-0 pt-[6px] pr-[12px] text-right">{r[1]}</div>
            <div className="w-[112px] shrink-0 pt-[6px] pr-[12px] text-right">{r[2]}</div>
            <div className="w-[506px] shrink-0 pt-[6px] pl-[12px]">{r[3]}</div>
            <div className="w-[99px] shrink-0 pt-[6px] pl-[12px]">Aristo</div>
            <div className="w-[372px] shrink-0 pt-[6px] pl-[12px]">{r[4]}</div>
            <div className="w-[260px] shrink-0 pt-[6px] pl-[12px]">{r[5]}</div>
            <div className="w-[115px] shrink-0 pt-[6px] pr-[12px] text-right">1</div>
            <div className="w-[105px] shrink-0 overflow-hidden pt-[6px] pl-[87px]">{r[6]}</div>
          </div>
        )
      })}
    </div>
  </div>
)

const GripDots = ({ vertical = true }: { vertical?: boolean }) => (
  <div className={`flex gap-[2px] ${vertical ? 'flex-col' : ''}`}>
    <div className="h-[2px] w-[2px] bg-[#8d93a3]" />
    <div className="h-[2px] w-[2px] bg-[#8d93a3]" />
    <div className="h-[2px] w-[2px] bg-[#8d93a3]" />
  </div>
)

export default function App() {
  return (
    <div className="flex h-[1080px] w-[1920px] overflow-hidden bg-[#ebebeb] [font-family:'Noto_Sans',sans-serif] text-[13px]">
      <Sidebar />
      <main className="flex min-w-0 flex-1 flex-col">
        <TabBar />
        <BreadcrumbBar />
        <div className="flex h-[722px] shrink-0">
          <div className="flex w-[5px] shrink-0 items-center justify-center">
            <GripDots />
          </div>
          <PivotPanel />
          <div className="flex w-[6px] shrink-0 items-center justify-center">
            <GripDots />
          </div>
          <ChartPanel />
        </div>
        <div className="flex h-[6px] shrink-0 items-center justify-center pl-[10px]">
          <GripDots vertical={false} />
        </div>
        <GridPanel />
      </main>
    </div>
  )
}
